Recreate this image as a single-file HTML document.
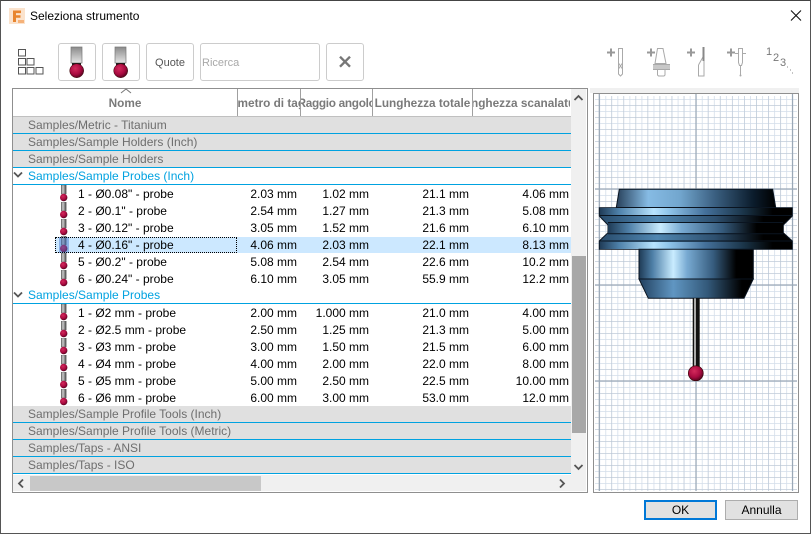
<!DOCTYPE html>
<html><head><meta charset="utf-8"><style>
html,body{margin:0;padding:0}
body{width:811px;height:534px;overflow:hidden;background:#fff;position:relative;font:12px "Liberation Sans",sans-serif;color:#000}
#win{position:absolute;left:0;top:0;width:809px;height:532px;border:1px solid #555;border-top-color:#444;background:#fff}
.a{position:absolute}
.btn{position:absolute;top:43px;height:36px;border:1px solid #ccc;border-radius:3px;background:#fff;box-sizing:content-box}
.th{position:absolute;top:89px;height:25px;border-right:1px solid #a0a0a0;color:#7a7a7a;font-weight:bold;font-size:11.8px;overflow:hidden;display:flex;justify-content:center;align-items:flex-end;white-space:nowrap;padding-bottom:2px;line-height:21px}
.g{position:absolute;left:13px;width:558px;height:16px;line-height:16px;border-bottom:1px solid #00a2e0;background:#e0e0e0;color:#6e6e6e;padding:0;text-indent:15px;font-size:12px;white-space:nowrap}
.o{background:#fff;color:#00a2e0}
.r{position:absolute;left:13px;width:558px;height:17px;line-height:17px;white-space:nowrap}
.r span{position:absolute;top:0}
.r .n{left:65px}
.r .c1{right:274px}.r .c2{right:202px}.r .c3{right:102px}.r .c4{right:2px}
.ic{position:absolute;left:46px;top:-1px}
.btm{position:absolute;top:500px;width:71px;height:18px;line-height:18px;text-align:center;background:#e1e1e1;border:1px solid #adadad;font-size:12px}
</style></head><body>
<div id="win"></div>
<svg class="a" style="left:9px;top:8px" width="16" height="16"><rect width="16" height="16" fill="#fbe3cd"/><path d="M4 2.5h8v2.6H7v2.2h4.5v2.5H7V14H4z" fill="#e8852f"/><rect x="9" y="12" width="6" height="3" fill="#f5b27a"/></svg>
<div class="a" style="left:30px;top:9px;font-size:12px;line-height:14px">Seleziona strumento</div>
<svg class="a" style="left:790px;top:8px" width="16" height="16"><path d="M1 2.5L11 12.5M11 2.5L1 12.5" stroke="#111" stroke-width="1.1" fill="none"/></svg>

<svg class="a" style="left:17px;top:48px" width="30" height="30" fill="none" stroke="#555" stroke-width="1"><rect x="1.5" y="1.5" width="7" height="6.5"/><rect x="1.5" y="10.5" width="7" height="6.5"/><rect x="10" y="10.5" width="7" height="6.5"/><rect x="1.5" y="19.5" width="7" height="6.5"/><rect x="10" y="19.5" width="7" height="6.5"/><rect x="19" y="19.5" width="7" height="6.5"/></svg>

<svg width="0" height="0" style="position:absolute"><defs>
<linearGradient id="st" x1="0" x2="1" y1="0" y2="0"><stop offset="0" stop-color="#666"/><stop offset=".35" stop-color="#ccc"/><stop offset="1" stop-color="#444"/></linearGradient>
<linearGradient id="st2" x1="0" x2="0" y1="0" y2="1"><stop offset="0" stop-color="#8a8a8a"/><stop offset="1" stop-color="#e4e4e4"/></linearGradient>
<radialGradient id="ba" cx=".4" cy=".35" r=".7"><stop offset="0" stop-color="#d42a5c"/><stop offset=".6" stop-color="#a80a40"/><stop offset="1" stop-color="#4a031a"/></radialGradient>
<linearGradient id="m1" x1="0" x2="1" y1="0" y2="0"><stop offset="0" stop-color="#27405a"/><stop offset=".2" stop-color="#86bbe4"/><stop offset=".4" stop-color="#72a6ce"/><stop offset=".62" stop-color="#3a5f80"/><stop offset=".86" stop-color="#0b1c2c"/><stop offset="1" stop-color="#000"/></linearGradient>
<linearGradient id="m2" x1="0" x2="1" y1="0" y2="0"><stop offset="0" stop-color="#1e3a55"/><stop offset=".12" stop-color="#4f80a8"/><stop offset=".3" stop-color="#c9ecff"/><stop offset=".42" stop-color="#78aad2"/><stop offset=".65" stop-color="#365c7e"/><stop offset=".85" stop-color="#000"/><stop offset="1" stop-color="#000"/></linearGradient>
<linearGradient id="m3" x1="0" x2="1" y1="0" y2="0"><stop offset="0" stop-color="#274a6a"/><stop offset=".3" stop-color="#5087b2"/><stop offset=".6" stop-color="#2e506f"/><stop offset=".85" stop-color="#000"/><stop offset="1" stop-color="#000"/></linearGradient>
<linearGradient id="m4" x1="0" x2="1" y1="0" y2="0"><stop offset="0" stop-color="#203c58"/><stop offset=".1" stop-color="#4f82ab"/><stop offset=".28" stop-color="#b8e4ff"/><stop offset=".36" stop-color="#8fc4ea"/><stop offset=".55" stop-color="#44709a"/><stop offset=".75" stop-color="#1a3448"/><stop offset=".9" stop-color="#000"/></linearGradient>
<linearGradient id="m5" x1="0" x2="1" y1="0" y2="0"><stop offset="0" stop-color="#203f5e"/><stop offset=".3" stop-color="#6096c2"/><stop offset=".6" stop-color="#33597a"/><stop offset=".9" stop-color="#000"/></linearGradient>
<symbol id="pr" viewBox="0 0 10 18"><rect x="2.2" y="0" width="5" height="9" fill="url(#st)" stroke="#555" stroke-width=".4"/><circle cx="4.7" cy="12.500" r="3.700" fill="url(#ba)"/></symbol>
<pattern id="minor" x="599.3" y="93" width="6.03" height="6" patternUnits="userSpaceOnUse"><path d="M0 0V6M0 0H6.03" stroke="#d4deea" stroke-width="1.6" fill="none"/></pattern>
<pattern id="mid" x="599.3" y="93" width="12.06" height="12" patternUnits="userSpaceOnUse"><path d="M0 0V12M0 0H12.06" stroke="#b6c3d1" stroke-width="1" fill="none"/></pattern>
</defs></svg>

<div class="btn" style="left:58px;width:36px"><svg width="36" height="36"><rect x="12" y="3" width="11" height="16" fill="url(#st2)" stroke="#777" stroke-width=".7"/><rect x="13" y="19" width="9" height="3" fill="#222"/><circle cx="17.700" cy="26.700" r="7" fill="url(#ba)" stroke="#300" stroke-width=".5"/></svg></div>
<div class="btn" style="left:102px;width:36px"><svg width="36" height="36"><rect x="12" y="3" width="11" height="16" fill="url(#st2)" stroke="#777" stroke-width=".7"/><rect x="13" y="19" width="9" height="3" fill="#222"/><circle cx="17.700" cy="26.700" r="7" fill="url(#ba)" stroke="#300" stroke-width=".5"/></svg></div>
<div class="btn" style="left:146px;width:46px;text-align:center;line-height:38px;color:#555;font-size:11px">Quote</div>
<div class="btn" style="left:200px;width:118px;line-height:39px;color:#a8a8a8;font-size:11px;text-indent:1px">Ricerca</div>
<div class="btn" style="left:326px;width:36px"><svg width="36" height="36"><path d="M13 12.700L23 22.700M23 12.700L13 22.700" stroke="#777" stroke-width="2.400"/></svg></div>

<svg class="a" style="left:600px;top:40px" width="200" height="42" fill="none" stroke="#aaa" stroke-width="1">
<path d="M7 12.500h8M11 8.500v8M47 12.500h8M51 8.500v8M87 12.500h8M91 8.500v8M127 12.500h8M131 8.500v8" stroke="#999" stroke-width="2"/>
<path d="M18.500 8.500h4v25.500l-2 2-2-2zM18.500 23l4 6M18.500 29l4-6"/>
<path d="M57.500 8.500h5.500l3 15h-11zM57.500 30v5l1 1h5.500l1-1v-5"/><rect x="53" y="24" width="17" height="6" fill="#c8c8c8" stroke="none"/><path d="M53 24.500h17M53 29.500h17" stroke="#aaa"/>
<path d="M98.500 25v11h5.500V16M98.500 25l5-9"/><path d="M103.500 7v14" stroke="#888" stroke-width="2"/>
<path d="M138.500 8.500h4v14l-1 3h-2l-1-3zM140.500 25v10M135 13.500h3M143 13.500h3" stroke="#aaa"/>
<circle cx="140.500" cy="35.500" r="1" fill="#aaa" stroke="none"/>
</svg>
<div class="a" style="left:766px;top:47px;color:#777;font-size:11px;line-height:11px">1</div>
<div class="a" style="left:773px;top:53px;color:#777;font-size:11px;line-height:11px">2</div>
<div class="a" style="left:780px;top:58px;color:#777;font-size:11px;line-height:11px">3</div>
<svg class="a" style="left:786px;top:66px" width="12" height="10"><path d="M1 1h1M4 4h1M6 7h1" stroke="#888"/></svg>

<!-- table -->
<div class="a" style="left:12px;top:88px;width:574px;height:403px;border:1px solid #8f8f8f;background:#fff"></div>
<div class="th" style="left:13px;width:224px">Nome</div>
<div class="th" style="left:238px;width:62px">Diametro di taglio</div>
<div class="th" style="left:301px;width:71px;letter-spacing:-.3px">Raggio angolo</div>
<div class="th" style="left:373px;width:99px">Lunghezza totale</div>
<div class="th" style="left:473px;width:97px;border-right:none">Lunghezza scanalatura</div>
<div class="a" style="left:13px;top:116px;width:558px;height:1px;background:#c0c0c0"></div>
<svg class="a" style="left:120px;top:88px" width="12" height="6"><path d="M1 5l5-4 5 4" stroke="#777" fill="none"/></svg>

<div class="g" style="top:117px">Samples/Metric - Titanium</div>
<div class="g" style="top:134px">Samples/Sample Holders (Inch)</div>
<div class="g" style="top:151px">Samples/Sample Holders</div>
<div class="g o" style="top:168px">Samples/Sample Probes (Inch)</div>

<div class="r" style="top:186px"><svg class="ic" width="10" height="18"><use href="#pr"/></svg><span class="n">1 - Ø0.08" - probe</span><span class="c1">2.03 mm</span><span class="c2">1.02 mm</span><span class="c3">21.1 mm</span><span class="c4">4.06 mm</span></div>
<div class="r" style="top:203px"><svg class="ic" width="10" height="18"><use href="#pr"/></svg><span class="n">2 - Ø0.1" - probe</span><span class="c1">2.54 mm</span><span class="c2">1.27 mm</span><span class="c3">21.3 mm</span><span class="c4">5.08 mm</span></div>
<div class="r" style="top:220px"><svg class="ic" width="10" height="18"><use href="#pr"/></svg><span class="n">3 - Ø0.12" - probe</span><span class="c1">3.05 mm</span><span class="c2">1.52 mm</span><span class="c3">21.6 mm</span><span class="c4">6.10 mm</span></div>
<div class="a" style="left:55px;top:237px;width:516px;height:16px;background:#cce8ff"></div>
<div class="r" style="top:237px"><svg class="ic" width="10" height="18"><use href="#pr"/></svg><div class="a" style="left:46px;top:0;width:10px;height:16px;background:rgba(60,110,200,.45)"></div><div class="a" style="left:42px;top:0;width:180px;height:14px;border:1px dotted #000"></div><span class="n">4 - Ø0.16" - probe</span><span class="c1">4.06 mm</span><span class="c2">2.03 mm</span><span class="c3">22.1 mm</span><span class="c4">8.13 mm</span></div>
<div class="r" style="top:254px"><svg class="ic" width="10" height="18"><use href="#pr"/></svg><span class="n">5 - Ø0.2" - probe</span><span class="c1">5.08 mm</span><span class="c2">2.54 mm</span><span class="c3">22.6 mm</span><span class="c4">10.2 mm</span></div>
<div class="r" style="top:271px"><svg class="ic" width="10" height="18"><use href="#pr"/></svg><span class="n">6 - Ø0.24" - probe</span><span class="c1">6.10 mm</span><span class="c2">3.05 mm</span><span class="c3">55.9 mm</span><span class="c4">12.2 mm</span></div>

<div class="g o" style="top:287px">Samples/Sample Probes</div>

<div class="r" style="top:305px"><svg class="ic" width="10" height="18"><use href="#pr"/></svg><span class="n">1 - Ø2 mm - probe</span><span class="c1">2.00 mm</span><span class="c2">1.000 mm</span><span class="c3">21.0 mm</span><span class="c4">4.00 mm</span></div>
<div class="r" style="top:322px"><svg class="ic" width="10" height="18"><use href="#pr"/></svg><span class="n">2 - Ø2.5 mm - probe</span><span class="c1">2.50 mm</span><span class="c2">1.25 mm</span><span class="c3">21.3 mm</span><span class="c4">5.00 mm</span></div>
<div class="r" style="top:339px"><svg class="ic" width="10" height="18"><use href="#pr"/></svg><span class="n">3 - Ø3 mm - probe</span><span class="c1">3.00 mm</span><span class="c2">1.50 mm</span><span class="c3">21.5 mm</span><span class="c4">6.00 mm</span></div>
<div class="r" style="top:356px"><svg class="ic" width="10" height="18"><use href="#pr"/></svg><span class="n">4 - Ø4 mm - probe</span><span class="c1">4.00 mm</span><span class="c2">2.00 mm</span><span class="c3">22.0 mm</span><span class="c4">8.00 mm</span></div>
<div class="r" style="top:373px"><svg class="ic" width="10" height="18"><use href="#pr"/></svg><span class="n">5 - Ø5 mm - probe</span><span class="c1">5.00 mm</span><span class="c2">2.50 mm</span><span class="c3">22.5 mm</span><span class="c4">10.00 mm</span></div>
<div class="r" style="top:390px"><svg class="ic" width="10" height="18"><use href="#pr"/></svg><span class="n">6 - Ø6 mm - probe</span><span class="c1">6.00 mm</span><span class="c2">3.00 mm</span><span class="c3">53.0 mm</span><span class="c4">12.0 mm</span></div>

<div class="g" style="top:406px">Samples/Sample Profile Tools (Inch)</div>
<div class="g" style="top:423px">Samples/Sample Profile Tools (Metric)</div>
<div class="g" style="top:440px">Samples/Taps - ANSI</div>
<div class="g" style="top:457px">Samples/Taps - ISO</div>

<svg class="a" style="left:13px;top:171px" width="11" height="8"><path d="M1 1.500l4 4 4-4" stroke="#555" stroke-width="1.800" fill="none"/></svg>
<svg class="a" style="left:13px;top:291px" width="11" height="8"><path d="M1 1.500l4 4 4-4" stroke="#555" stroke-width="1.800" fill="none"/></svg>

<!-- scrollbars -->
<div class="a" style="left:571px;top:89px;width:15px;height:402px;background:#f0f0f0"></div>
<div class="a" style="left:572px;top:256px;width:14px;height:177px;background:#a8a8a8"></div>
<div class="a" style="left:13px;top:475px;width:558px;height:16px;background:#f0f0f0"></div>
<div class="a" style="left:30px;top:476px;width:231px;height:15px;background:#c8c8c8"></div>
<svg class="a" style="left:573px;top:94px" width="11" height="8"><path d="M1.500 6l4-4 4 4" stroke="#555" stroke-width="1.800" fill="none"/></svg>
<svg class="a" style="left:573px;top:463px" width="11" height="8"><path d="M1.500 2l4 4 4-4" stroke="#555" stroke-width="1.800" fill="none"/></svg>
<svg class="a" style="left:17px;top:478px" width="8" height="11"><path d="M6 1.500l-4 4 4 4" stroke="#555" stroke-width="1.800" fill="none"/></svg>
<svg class="a" style="left:558px;top:478px" width="8" height="11"><path d="M2 1.500l4 4-4 4" stroke="#555" stroke-width="1.800" fill="none"/></svg>

<!-- preview -->
<div class="a" style="left:590px;top:88px;width:209px;height:5px;background:#f0f0f0"></div>
<svg class="a" style="left:0;top:0" width="811" height="534">
<rect x="593.500" y="93.500" width="205" height="399" fill="#fff" stroke="#8f8f8f"/>
<rect x="595" y="96" width="202" height="395" fill="url(#minor)"/>
<rect x="595" y="96" width="202" height="395" fill="url(#mid)"/>
<path d="M599.300 94V491M696 94V491M792.500 94V491M595 189H797M595 285H797M595 381H797" stroke="#9aa8b6" stroke-width="1.200"/>
<path d="M619.300 189.300H772.700L775.700 207.500H616.300Z" fill="url(#m1)" stroke="#0a1420"/>
<path d="M599.300 207.700H792.300V216L783.300 225V232.700L792.300 241V249.300H599.300V241L608 232.700V225L599.300 216Z" fill="url(#m3)" stroke="#0a1420"/>
<path d="M600 208H792V215H600Z" fill="url(#m4)"/>
<path d="M608 223H783V233H608Z" fill="url(#m2)"/>
<path d="M600 242H792V249H600Z" fill="url(#m4)"/>
<path d="M600 215.500H792M608 222.500H783M608 233.700H783M600 241H792" stroke="#0a1420"/>
<path d="M639 249.300H753.300V279H639Z" fill="url(#m2)" stroke="#0a1420"/>
<path d="M639 279H753.300L744 298.300H648.300Z" fill="url(#m5)" stroke="#0a1420"/>
<rect x="692.700" y="298.300" width="7" height="72" fill="#111"/>
<rect x="694" y="298.300" width="2" height="72" fill="#aaa"/>
<circle cx="695.800" cy="373.300" r="7.500" fill="url(#ba)" stroke="#300" stroke-width=".6"/>
</svg>

<div class="btm" style="left:644px;top:500px;width:69px;height:16px;line-height:16px;border:2px solid #0078d7">OK</div>
<div class="btm" style="left:725px;top:500px;width:71px;height:18px">Annulla</div>
</body></html>
